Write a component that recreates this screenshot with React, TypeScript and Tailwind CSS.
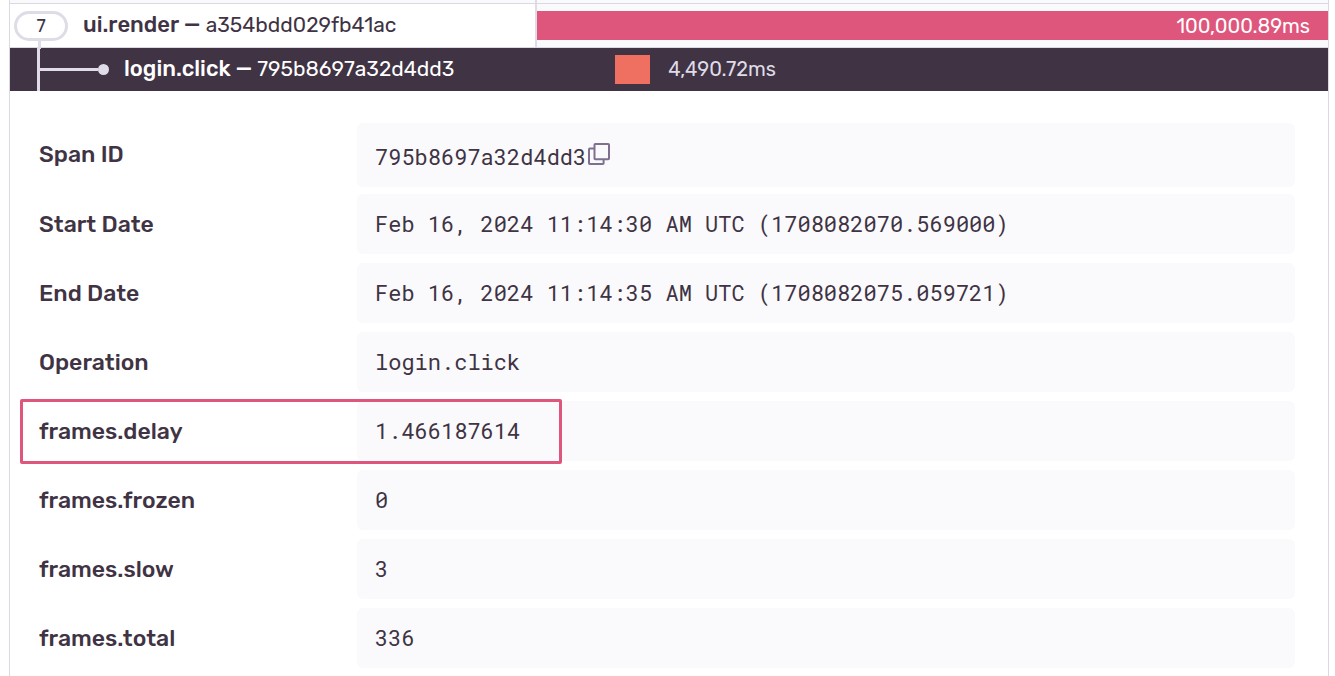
import React from 'react';

type Detail = { label: string; value: string; copyable?: boolean; highlighted?: boolean };

const details: Detail[] = [
  { label: 'Span ID', value: '795b8697a32d4dd3', copyable: true },
  { label: 'Start Date', value: 'Feb 16, 2024 11:14:30 AM UTC (1708082070.569000)' },
  { label: 'End Date', value: 'Feb 16, 2024 11:14:35 AM UTC (1708082075.059721)' },
  { label: 'Operation', value: 'login.click' },
  { label: 'frames.delay', value: '1.466187614', highlighted: true },
  { label: 'frames.frozen', value: '0' },
  { label: 'frames.slow', value: '3' },
  { label: 'frames.total', value: '336' },
];

function CopyIcon() {
  return (
    <svg className="size-[22px]" viewBox="0 0 22 22" fill="none" stroke="#80708f" strokeWidth="2" strokeLinejoin="round" aria-hidden="true">
      <rect x="6.5" y="1" width="14.5" height="15.2" rx="0.8" />
      <path d="M6.5 5.6H1.8a.8.8 0 0 0-.8.8v13.8a.8.8 0 0 0 .8.8h13a.8.8 0 0 0 .8-.8v-4" />
    </svg>
  );
}

function SpanRows() {
  return (
    <section aria-label="Spans">
      <div className="flex h-11 border-b border-[#dbd8e4]">
        <div className="flex w-2/5 items-center border-r-2 border-[#dfdce8] pl-1">
          <div className="relative">
            <button
              type="button"
              aria-label="Toggle 7 child spans"
              className="flex h-[30px] w-[54px] items-center justify-center rounded-full border-3 border-[#dfdce8] bg-white text-lg"
            >
              7
            </button>
            <span className="absolute top-full left-6 h-2 w-[3px] bg-[#dfdce8]" />
          </div>
          <span className="pb-0.5 pl-[15px] text-[21px]">
            <strong className="text-[22px] font-medium">ui.render —</strong> a354bdd029fb41ac
          </span>
        </div>
        <div className="flex flex-1 items-center bg-[#fafafc]">
          <div className="flex h-[29px] flex-1 items-center justify-end bg-[#df567c] pr-[18px] text-[20px] text-white">
            100,000.89ms
          </div>
        </div>
      </div>
      <div className="flex h-[43px] bg-[#403344] text-white">
        <div className="flex w-2/5 items-center pl-[27px]">
          <span className="h-full w-[3px] bg-[#dfdce8]" />
          <span className="h-[3px] w-[58px] bg-[#dfdce8]" />
          <span className="size-[11px] rounded-full bg-[#dfdce8]" />
          <span className="pb-0.5 pl-[15px] text-[21px]">
            <strong className="text-[22px] font-medium">login.click —</strong> 795b8697a32d4dd3
          </span>
        </div>
        <div className="flex flex-1 items-center">
          <span className="ml-[9.9%] h-[29px] w-[4.4%] bg-[#ef7061]" />
          <span className="pb-0.5 pl-[18px] text-[20px] text-[#dfdce8]">4,490.72ms</span>
        </div>
      </div>
    </section>
  );
}

function DetailRow({ label, value, copyable, highlighted }: Detail) {
  return (
    <tr className="relative">
      <th scope="row" className="w-[347px] pb-[9px] pl-[29px] text-left align-middle text-[23px] font-medium">
        {label}
        {highlighted && (
          <span className="pointer-events-none absolute -top-0.5 left-2.5 h-[65px] w-[542px] rounded-xs border-3 border-[#df567c]" />
        )}
      </th>
      <td className={copyable ? 'p-0 pb-[7px]' : 'p-0 pb-[9px]'}>
        <div
          className={`flex items-center gap-0.5 rounded-md bg-[#fafafc] px-[18px] font-['Roboto_Mono','DejaVu_Sans_Mono',monospace] text-[22px] ${copyable ? 'h-16 pt-0.5' : 'h-[60px] pb-0.5'}`}
        >
          <span>{value}</span>
          {copyable && (
            <button type="button" aria-label="Copy span ID" className="pb-1">
              <CopyIcon />
            </button>
          )}
        </div>
      </td>
    </tr>
  );
}

export default function App() {
  return (
    <main className="min-h-screen bg-white pr-1.5 pl-[9px] font-['Rubik','Roboto',sans-serif] text-[#403344]">
      <div className="min-h-screen border-x border-[#dbd8e4]">
        <div className="flex h-1 border-b border-[#dbd8e4] bg-[#fafafc]">
          <div className="w-2/5 border-r-2 border-[#dfdce8]" />
        </div>
        <SpanRows />
        <div className="pt-8 pr-[33px]">
          <table className="w-full border-collapse">
            <tbody>
              {details.map((detail) => (
                <DetailRow key={detail.label} {...detail} />
              ))}
            </tbody>
          </table>
        </div>
      </div>
    </main>
  );
}
